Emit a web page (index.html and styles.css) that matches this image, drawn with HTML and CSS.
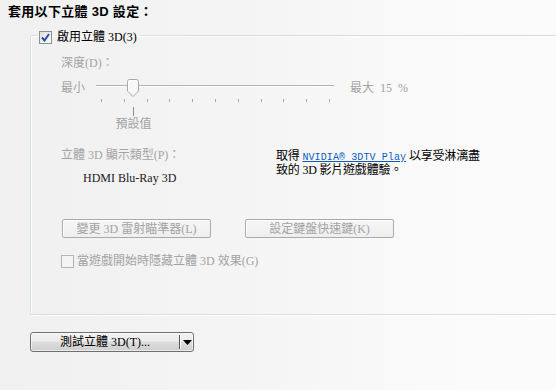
FILE: index.html
```html
<!DOCTYPE html>
<html lang="zh-Hant">
<head>
<meta charset="utf-8">
<link rel="stylesheet" href="styles.css">
</head>
<body>
<div class="page">
  <div class="title">套用以下立體 3D 設定：</div>
  <fieldset class="group">
    <legend class="legend">
      <label class="chk">
        <span class="box checked"><svg width="9" height="9" viewBox="0 0 9 9"><path d="M1 4.5 L3.5 7.5 L8 1" fill="none" stroke="#2a4da8" stroke-width="2"/></svg></span>
        <span>啟用立體 3D(3)</span>
      </label>
    </legend>
    <div class="depth-label dim">深度(D)：</div>
    <div class="slider-row">
      <span class="min dim">最小</span>
      <div class="slider">
        <div class="track"></div>
        <div class="thumb"><svg width="12" height="18" viewBox="0 0 12 18"><path d="M0.5 2.5 Q0.5 0.5 2.5 0.5 L9.5 0.5 Q11.5 0.5 11.5 2.5 L11.5 12 L6 17.5 L0.5 12 Z" fill="#f7f7f7" stroke="#a8a8a8"/><path d="M1.5 12 L1.5 2.5 Q1.5 1.5 2.5 1.5 L9.5 1.5" fill="none" stroke="#ffffff"/></svg></div>
        <div class="ticks">
          <i></i><i></i><i></i><i></i><i></i><i></i><i></i><i></i><i></i><i></i><i></i>
        </div>
        <div class="default">
          <span class="marker"></span>
          <span class="dim">預設值</span>
        </div>
      </div>
      <span class="max dim">最大 15 %</span>
    </div>
    <div class="display-row">
      <div class="display-left">
        <div class="dim">立體 3D 顯示類型(P)：</div>
        <div class="display-value">HDMI Blu-Ray 3D</div>
      </div>
      <div class="promo">取得 <a class="link" href="#">NVIDIA® 3DTV Play</a> 以享受淋漓盡<br>致的 3D 影片遊戲體驗。</div>
    </div>
    <div class="btn-row">
      <button class="btn" disabled>變更 3D 雷射瞄準器(L)</button>
      <button class="btn" disabled>設定鍵盤快速鍵(K)</button>
    </div>
    <label class="chk chk2 dim">
      <span class="box dimbox"></span>
      <span>當遊戲開始時隱藏立體 3D 效果(G)</span>
    </label>
  </fieldset>
  <div class="split">
    <span class="split-main">測試立體 3D(T)...</span>
    <span class="split-sep"></span>
    <span class="split-arrow"><svg width="9" height="5" viewBox="0 0 9 5"><path d="M0 0 L9 0 L4.5 5 Z" fill="#000"/></svg></span>
  </div>
</div>
</body>
</html>
```

FILE: styles.css
```css
html, body {
  margin: 0;
  padding: 0;
}
body {
  width: 556px;
  height: 390px;
  overflow: hidden;
  background: linear-gradient(to right, #f0f0f0 0%, #f4f4f4 40%, #fafafa 80%, #fbfbfb 100%);
  font-family: "Liberation Serif", "Noto Sans CJK TC", serif;
  font-size: 12px;
  line-height: 14px;
  color: #000;
}
.page {
  position: relative;
  height: 390px;
}
.title {
  padding: 5px 0 0 8px;
  height: 14px;
  font-family: "Liberation Sans", "Noto Sans CJK TC", sans-serif;
  font-weight: bold;
  font-size: 13px;
  line-height: 14px;
  letter-spacing: 0.3px;
}
.group {
  margin: 8px -20px 0 30px;
  padding: 0 0 0 30px;
  border: 1px solid #d6dde3;
  border-radius: 2px;
  box-shadow: inset 1px 1px 0 #ffffff, 1px 1px 0 #ffffff;
  height: 288px;
  box-sizing: border-box;
  min-width: 0;
  display: block;
}
.legend {
  margin-left: -23px;
  padding: 4px 3px 0 1px;
  height: 13px;
  box-sizing: content-box;
}
.chk {
  display: flex;
  align-items: center;
  gap: 5px;
  line-height: 13px;
}
.box {
  width: 11px;
  height: 11px;
  border: 1px solid #8f8f8f;
  background: linear-gradient(135deg, #dcdcdc, #ffffff);
  display: flex;
  align-items: center;
  justify-content: center;
  flex: none;
}
.box.checked {
  background: linear-gradient(135deg, #e0e0e0, #fbfbfb);
}
.dimbox {
  border-color: #b4b4b4;
  background: #f4f4f4;
}
.dim {
  color: #a3a3a3;
}
.depth-label {
  margin-top: 12px;
  height: 14px;
}
.slider-row {
  display: flex;
  align-items: flex-start;
  margin-top: 8px;
}
.min {
  width: 35px;
  margin-top: 3px;
  flex: none;
}
.max {
  margin-left: 16px;
  margin-top: 3px;
  word-spacing: 3px;
}
.slider {
  position: relative;
  width: 238px;
  flex: none;
}
.track {
  margin-top: 7px;
  height: 1px;
  background: #b2b2b2;
  border-bottom: 1px solid #ffffff;
}
.thumb {
  position: absolute;
  left: 31px;
  top: 1px;
  width: 12px;
  height: 18px;
}
.thumb svg {
  display: block;
}
.ticks {
  margin-top: 12px;
  padding: 0 4px 0 5px;
  display: flex;
  justify-content: space-between;
  height: 3px;
}
.ticks i {
  width: 1px;
  height: 3px;
  background: #a8a8a8;
}
.default {
  margin-left: 12px;
  width: 51px;
  margin-top: 5px;
  display: flex;
  flex-direction: column;
  align-items: center;
}
.marker {
  width: 1px;
  height: 9px;
  background: #8c8c8c;
  margin-bottom: 1px;
}
.display-row {
  display: flex;
  margin-top: 17px;
}
.display-left {
  width: 215px;
  flex: none;
}
.display-value {
  margin-top: 9px;
  padding-left: 22px;
  color: #1a1a1a;
}
.promo {
  margin-top: 2px;
  line-height: 13px;
  white-space: nowrap;
  letter-spacing: -0.2px;
}
.link {
  font-family: "Liberation Mono", monospace;
  font-size: 10px;
  letter-spacing: 0.1px;
  color: #0a5cc2;
  text-decoration: underline;
}
.btn-row {
  display: flex;
  gap: 34px;
  margin-top: 34px;
  margin-left: 1px;
}
.btn {
  width: 149px;
  height: 19px;
  padding: 0;
  border: 1px solid #aaaaaa;
  border-radius: 2px;
  background: linear-gradient(#f6f6f6, #eeeeee);
  box-shadow: inset 1px 1px 0 #ffffff;
  font-family: "Liberation Serif", "Noto Sans CJK TC", serif;
  font-size: 12px;
  line-height: 14px;
  color: #a3a3a3;
}
.chk2 {
  margin-top: 17px;
  gap: 3px;
}
.split {
  margin: 17px 0 0 30px;
  width: 164px;
  height: 20px;
  box-sizing: border-box;
  border: 1px solid #707070;
  border-radius: 3px;
  background: linear-gradient(#f2f2f2 0%, #ebebeb 45%, #dddddd 50%, #cfcfcf 100%);
  box-shadow: inset 0 0 0 1px rgba(255,255,255,0.6);
  display: flex;
  align-items: center;
}
.split-main {
  width: 148px;
  text-align: center;
  line-height: 14px;
}
.split-sep {
  width: 1px;
  height: 14px;
  background: #555;
  border-right: 1px solid #fff;
}
.split-arrow {
  flex: 1;
  display: flex;
  justify-content: center;
  align-items: center;
}
.split-arrow svg {
  display: block;
}
```
